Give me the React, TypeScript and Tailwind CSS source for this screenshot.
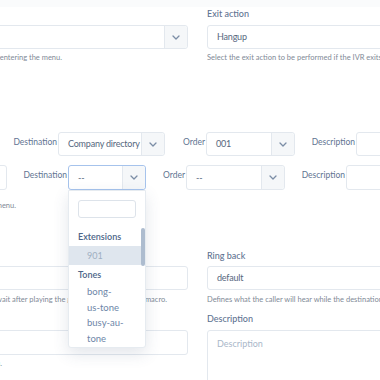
import React from "react";

function Chevron() {
  return (
    <svg width="8" height="5" viewBox="0 0 8 5" fill="none">
      <path d="M1 1l3 3 3-3" stroke="#7b8da6" strokeWidth="1.3" strokeLinecap="round" strokeLinejoin="round" />
    </svg>
  );
}

function Select({
  value,
  className,
  focus = false,
  children,
}: {
  value: string;
  className: string;
  focus?: boolean;
  children?: React.ReactNode;
}) {
  return (
    <div
      className={`relative flex h-[24px] shrink-0 rounded-[3px] border bg-white ${
        focus ? "border-[#a6c3ec]" : "border-[#e3e8ee]"
      } ${className}`}
    >
      <div className="flex flex-1 items-center overflow-hidden whitespace-nowrap pl-[9px] text-[9px] tracking-[-0.2px] text-[#56677e]">
        {value}
      </div>
      <div className="flex w-[23px] shrink-0 items-center justify-center rounded-r-[3px] border-l border-[#e3e8ee] bg-[#f5f7f9]">
        <Chevron />
      </div>
      {children}
    </div>
  );
}

function Label({ children, className = "" }: { children: React.ReactNode; className?: string }) {
  return (
    <div className={`h-[12px] whitespace-nowrap text-[9px] leading-[12px] font-medium text-[#5f7492] ${className}`}>
      {children}
    </div>
  );
}

function Help({ children, className = "" }: { children: React.ReactNode; className?: string }) {
  return (
    <div className={`whitespace-nowrap text-[7.5px] leading-[10px] text-[#7f8a97] ${className}`}>{children}</div>
  );
}

function RowLabel({ children, className }: { children: React.ReactNode; className: string }) {
  return (
    <div className={`mb-[4px] shrink-0 whitespace-nowrap pr-[1px] text-right text-[8.5px] text-[#5f7492] ${className}`}>
      {children}
    </div>
  );
}

function Dropdown() {
  return (
    <div className="absolute left-[-1px] top-[calc(100%+1px)] z-10 h-[158px] w-[78px] rounded-b-[3px] border border-[#e6ebf0] bg-white shadow-[0_6px_16px_rgba(60,80,110,0.14)]">
      <div className="px-[9px] pt-[9px]">
        <div className="h-[18px] rounded-[3px] border border-[#dde3ea] bg-white" />
      </div>
      <div className="relative mt-[10px] h-[118px] overflow-hidden">
        <div className="mr-[4px]">
          <div className="h-[18px] pl-[9px] text-[9px] leading-[18px] font-semibold text-[#4d6588]">Extensions</div>
          <div className="h-[19px] bg-[#dfe6ee] pl-[18px] text-[9px] leading-[19px] text-[#a0afc1]">901</div>
          <div className="h-[19px] pl-[9px] text-[9px] leading-[19px] font-semibold text-[#4d6588]">Tones</div>
          <div className="pl-[18px] text-[9.5px] leading-[15.5px] text-[#6e86a8]">
            bong-
            <br />
            us-tone
          </div>
          <div className="pl-[18px] text-[9.5px] leading-[15.5px] text-[#6e86a8]">
            busy-au-
            <br />
            tone
          </div>
        </div>
        <div className="absolute right-0 top-0 h-[38px] w-[4px] rounded-[2px] bg-[#adbccf]" />
      </div>
    </div>
  );
}

export default function App() {
  return (
    <div className="relative h-[380px] w-[380px] overflow-hidden bg-white font-['Lato',sans-serif]">
      <div className="h-[7px] bg-[#fafbfc]" />

      {/* top section */}
      <div className="-ml-[170px] mt-[1px] grid w-[735px] grid-cols-2 gap-x-[19px]">
        <div>
          <Label className="mb-[5px]">Greeting</Label>
          <Select value="" className="w-full" />
          <div className="mt-[4px] flex w-[232px] justify-end">
            <Help>The greeting to be played to the caller when entering the menu.</Help>
          </div>
        </div>
        <div>
          <Label className="mb-[5px]">Exit action</Label>
          <Select value="Hangup" className="w-full" />
          <Help className="mt-[4px]">
            Select the exit action to be performed if the IVR exits because of a timeout or too many invalid attempts.
          </Help>
        </div>
      </div>

      {/* destination row 1 */}
      <div className="mt-[69px] flex h-[24px] items-center">
        <RowLabel className="w-[58px]">Destination</RowLabel>
        <Select value="Company directory" className="w-[107px]" />
        <RowLabel className="w-[41px]">Order</RowLabel>
        <Select value="001" className="w-[89px]" />
        <RowLabel className="w-[61px]">Description</RowLabel>
        <div className="h-[24px] w-[100px] shrink-0 rounded-[3px] border border-[#e3e8ee]" />
      </div>

      {/* destination row 2 */}
      <div className="mt-[9px] flex h-[25px] items-center">
        <div className="-ml-[53px] h-[25px] w-[60px] shrink-0 rounded-[3px] border border-[#e3e8ee]" />
        <RowLabel className="w-[61px]">Destination</RowLabel>
        <Select value="--" className="h-[25px] w-[78px]" focus>
          <Dropdown />
        </Select>
        <RowLabel className="w-[40px]">Order</RowLabel>
        <Select value="--" className="h-[25px] w-[99px]" />
        <RowLabel className="w-[61px]">Description</RowLabel>
        <div className="h-[25px] w-[100px] shrink-0 rounded-[3px] border border-[#e3e8ee]" />
      </div>

      <div className="mt-[11px] flex w-[16px] justify-end">
        <Help>Add destinations to the IVR menu.</Help>
      </div>

      {/* bottom section */}
      <div className="-ml-[170px] mt-[39px] grid w-[735px] grid-cols-2 gap-x-[19px]">
        <div>
          <Label className="mb-[4px]">Timeout</Label>
          <div className="h-[24px] w-full rounded-[3px] border border-[#e3e8ee]" />
          <div className="mt-[5px] flex w-[337px] justify-end">
            <Help>The number of milliseconds to wait after playing the greeting or running the macro.</Help>
          </div>
          <Label className="mb-[5px] mt-[8px]">Max failures</Label>
          <div className="h-[25px] w-full rounded-[3px] border border-[#e3e8ee]" />
          <div className="mt-[4px] flex w-[172px] justify-end">
            <Help>Maximum number of failures before exiting the menu.</Help>
          </div>
        </div>
        <div>
          <Label className="mb-[4px]">Ring back</Label>
          <Select value="default" className="w-full" />
          <Help className="mt-[5px]">
            Defines what the caller will hear while the destination is being called.
          </Help>
          <Label className="mb-[5px] mt-[8px]">Description</Label>
          <textarea
            placeholder="Description"
            className="h-[70px] w-full resize-none rounded-[3px] border border-[#e3e8ee] px-[9px] py-[7px] text-[9px] leading-[12px] text-[#56677e] placeholder:text-[#a9b7c9]"
          />
        </div>
      </div>
    </div>
  );
}
